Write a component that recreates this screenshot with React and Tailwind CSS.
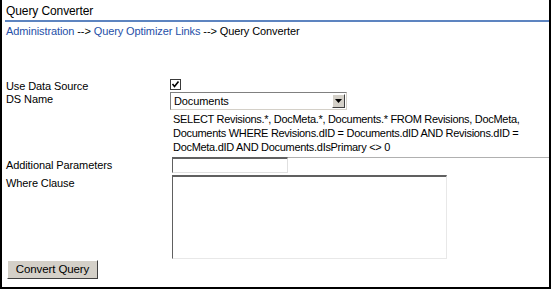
export default function App() {
    return (
        <div className="w-[551px] h-[289px] bg-white border-l-2 border-r-2 border-b-2 border-black overflow-hidden text-[11px] text-black tracking-[-0.1px]" style={{fontFamily: '"Liberation Sans", Arial, sans-serif'}}>
            <div className="ml-[3px] pt-[4px] pb-[2px] pl-[1px] border-b-2 border-[#5d84c0] text-[12px] leading-[14px]">
                Query Converter
            </div>
            <div className="ml-[4px] mt-[3px] text-[11px] leading-[13px]">
                <span className="text-[#2650a8]">Administration</span>
                <span> --&gt; </span>
                <span className="text-[#2650a8]">Query Optimizer Links</span>
                <span> --&gt; Query Converter</span>
            </div>

            <div className="mt-[39px]">
                <div className="flex h-[14px] items-center">
                    <div className="w-[168px] pl-[4px] leading-[14px] mt-[3px]">Use Data Source</div>
                    <div className="w-[11px] h-[11px] border border-[#3a3a3a] bg-white flex items-center justify-center">
                        <svg width="9" height="9" viewBox="0 0 9 9">
                            <path d="M1.5 4 L3.5 6.5 L7.5 1.5" stroke="#000" strokeWidth="1.6" fill="none" />
                        </svg>
                    </div>
                </div>
                <div className="flex mt-[1px] h-[18px]">
                    <div className="w-[168px] pl-[4px] leading-[14px]">DS Name</div>
                    <div className="w-[177px] h-[18px] flex border-t border-l border-[#808080] border-r border-b border-r-[#d4d0c8] border-b-[#d4d0c8]">
                        <div className="flex-1 pl-[3px] leading-[16px]">Documents</div>
                        <div className="w-[13px] h-[14px] mt-[1px] mr-[1px] bg-[#d4d0c8] border border-t-white border-l-white border-r-[#404040] border-b-[#404040] flex items-center justify-center">
                            <svg width="7" height="4" viewBox="0 0 7 4"><path d="M0 0 H7 L3.5 4 Z" fill="#000" /></svg>
                        </div>
                    </div>
                </div>
                <div className="flex mt-[2px]">
                    <div className="w-[171px] shrink-0"></div>
                    <div className="leading-[14px] whitespace-nowrap tracking-[-0.3px]">
                        <div>SELECT Revisions.*, DocMeta.*, Documents.* FROM Revisions, DocMeta,</div>
                        <div>Documents WHERE Revisions.dID = Documents.dID AND Revisions.dID =</div>
                        <div>DocMeta.dID AND Documents.dIsPrimary &lt;&gt; 0</div>
                    </div>
                </div>
                <div className="flex mt-[3px]">
                    <div className="w-[170px] shrink-0 pl-[4px] leading-[14px] mt-[1px]">Additional Parameters</div>
                    <div className="w-[116px] h-[16px] border-t-2 border-l border-[#606060] border-r border-b border-r-[#e0e0e0] border-b-[#e0e0e0]"></div>
                    <div className="flex-1 border-t border-[#b0b0b0]"></div>
                </div>
                <div className="flex mt-[2px]">
                    <div className="w-[170px] shrink-0 pl-[4px] leading-[14px] mt-[1px]">Where Clause</div>
                    <div className="w-[275px] h-[84px] border-t-2 border-l border-[#606060] border-r border-b border-r-[#e8e8e8] border-b-[#e8e8e8]"></div>
                </div>
                <div className="ml-[5px] mt-[1px]">
                    <button className="w-[91px] h-[19px] bg-[#d4d0c8] border border-t-white border-l-white border-r-[#404040] border-b-[#404040] text-[11.5px] leading-[15px]" style={{fontFamily: '"Liberation Sans", Arial, sans-serif'}}>
                        Convert Query
                    </button>
                </div>
            </div>
        </div>
    );
}
